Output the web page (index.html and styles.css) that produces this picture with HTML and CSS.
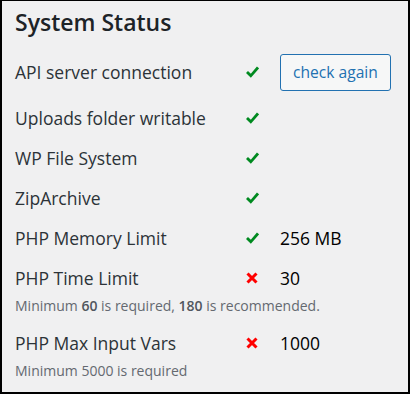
FILE: index.html
```html
<!DOCTYPE html>
<html lang="en">
<head>
  <meta charset="UTF-8">
  <title>System Status</title>
  <link rel="stylesheet" href="styles.css">
</head>
<body>
  <div class="panel">
    <h2>System Status</h2>

    <div class="row first">
      <span class="label">API server connection</span>
      <span class="icon ok"><svg width="13" height="12" viewBox="0 0 13 12"><path d="M1 6 L4.8 9.8 L12 1.5" fill="none" stroke="#008a20" stroke-width="2.8"/></svg></span>
      <span class="value"><button class="btn">check again</button></span>
    </div>

    <div class="row">
      <span class="label">Uploads folder writable</span>
      <span class="icon ok"><svg width="13" height="12" viewBox="0 0 13 12"><path d="M1 6 L4.8 9.8 L12 1.5" fill="none" stroke="#008a20" stroke-width="2.8"/></svg></span>
    </div>

    <div class="row">
      <span class="label">WP File System</span>
      <span class="icon ok"><svg width="13" height="12" viewBox="0 0 13 12"><path d="M1 6 L4.8 9.8 L12 1.5" fill="none" stroke="#008a20" stroke-width="2.8"/></svg></span>
    </div>

    <div class="row">
      <span class="label">ZipArchive</span>
      <span class="icon ok"><svg width="13" height="12" viewBox="0 0 13 12"><path d="M1 6 L4.8 9.8 L12 1.5" fill="none" stroke="#008a20" stroke-width="2.8"/></svg></span>
    </div>

    <div class="row">
      <span class="label">PHP Memory Limit</span>
      <span class="icon ok"><svg width="13" height="12" viewBox="0 0 13 12"><path d="M1 6 L4.8 9.8 L12 1.5" fill="none" stroke="#008a20" stroke-width="2.8"/></svg></span>
      <span class="value">256 MB</span>
    </div>

    <div class="row">
      <span class="label">PHP Time Limit</span>
      <span class="icon bad"><svg width="12" height="12" viewBox="0 0 12 12"><path d="M1.5 1.5 L10.5 10.5 M10.5 1.5 L1.5 10.5" stroke="#ff0000" stroke-width="3"/></svg></span>
      <span class="value">30</span>
    </div>
    <p class="note">Minimum <b>60</b> is required, <b>180</b> is recommended.</p>

    <div class="row">
      <span class="label">PHP Max Input Vars</span>
      <span class="icon bad"><svg width="12" height="12" viewBox="0 0 12 12"><path d="M1.5 1.5 L10.5 10.5 M10.5 1.5 L1.5 10.5" stroke="#ff0000" stroke-width="3"/></svg></span>
      <span class="value">1000</span>
    </div>
    <p class="note">Minimum 5000 is required</p>
  </div>
</body>
</html>
```

FILE: styles.css
```css
html, body {
  margin: 0;
  padding: 0;
}
body {
  font-family: "Open Sans", "Noto Sans", Arial, sans-serif;
  color: #1d2327;
}
.panel {
  width: 410px;
  height: 394px;
  box-sizing: border-box;
  background: #f0f0f1;
  border: 2px solid #000;
  border-top-width: 1px;
  padding: 0 13px;
  overflow: hidden;
}
h2 {
  font-size: 23px;
  font-weight: 600;
  line-height: 32px;
  margin: 5px 0 8px 0;
  color: #1d2327;
}
.row {
  display: flex;
  align-items: center;
  height: 40px;
  font-size: 17.5px;
}
.row.first {
  height: 52px;
}
.label {
  width: 231px;
  color: #2c3338;
}
.icon {
  width: 34px;
  display: flex;
  align-items: center;
}
.value {
  color: #000;
}
.btn {
  font-family: inherit;
  font-size: 15.6px;
  color: #2271b1;
  background: #f6f7f7;
  border: 1px solid #2271b1;
  border-radius: 3px;
  padding: 0 12px;
  height: 37px;
  cursor: pointer;
}
.note {
  margin: -3px 0 6px 0;
  font-size: 14px;
  line-height: 22px;
  color: #646970;
}
.note b {
  font-weight: 600;
  color: #50575e;
}
```
